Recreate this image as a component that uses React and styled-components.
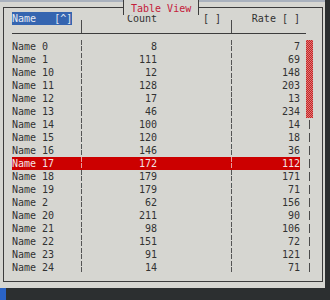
import styled, { createGlobalStyle, css } from 'styled-components';

const rows = [
  ['Name 0', 8, 7],
  ['Name 1', 111, 69],
  ['Name 10', 12, 148],
  ['Name 11', 128, 203],
  ['Name 12', 17, 13],
  ['Name 13', 46, 234],
  ['Name 14', 100, 14],
  ['Name 15', 120, 18],
  ['Name 16', 146, 36],
  ['Name 17', 172, 112],
  ['Name 18', 179, 171],
  ['Name 19', 179, 71],
  ['Name 2', 62, 156],
  ['Name 20', 211, 90],
  ['Name 21', 98, 106],
  ['Name 22', 151, 72],
  ['Name 23', 91, 121],
  ['Name 24', 14, 71],
];

const selectedRow = 'Name 17';

// thumb covers the first six rows
const thumbRows = 6;

function App() {
  return (
    <>
      <GlobalStyle />
      <Screen>
        <Window>
          <Title>Table View</Title>
          <Frame>
            <HeaderRow>
              <NameHeader>Name   [^]</NameHeader>
              <HeaderTick />
              <CountHeader>
                <span>Count</span>
                <span>[ ]</span>
              </CountHeader>
              <HeaderTick />
              <RateHeader>Rate [ ]</RateHeader>
            </HeaderRow>

            <Body>
              <Rows>
                {rows.map(([name, count, rate]) => {
                  const active = name === selectedRow;
                  return (
                    <Row key={name} $active={active}>
                      <NameCell>{name}</NameCell>
                      <Divider $active={active} />
                      <CountCell>{count}</CountCell>
                      <Divider $active={active} />
                      <RateCell>{rate}</RateCell>
                    </Row>
                  );
                })}
              </Rows>

              <ScrollBar>
                <Thumb style={{ height: thumbRows * 13 }} />
                <Track />
              </ScrollBar>
            </Body>
          </Frame>
        </Window>

        <BottomBar>
          <TaskBlock />
        </BottomBar>
      </Screen>
    </>
  );
}

const GlobalStyle = createGlobalStyle`
  * {
    margin: 0;
    padding: 0;
    box-sizing: border-box;
  }

  body {
    background: #2c2f30;
    font-family: 'DejaVu Sans Mono', 'Liberation Mono', monospace;
    font-size: 10px;
    color: #323232;
  }
`;

const Screen = styled.div`
  width: 330px;
  height: 300px;
  display: flex;
  flex-direction: column;
  background: #2c2f30;
  overflow: hidden;
`;

const Window = styled.div`
  position: relative;
  width: 325px;
  height: 288px;
  background: #d6d6d1;
  border-top: 2px solid #a9b1bd;
  padding: 5px 2px 6px 3px;
`;

const Title = styled.div`
  position: absolute;
  top: -2px;
  left: 123px;
  height: 15px;
  padding: 3px 7px 0;
  line-height: 12px;
  color: #c4203a;
  background: #d6d6d1;
  border-left: 1px solid #3c3c3c;
  border-right: 1px solid #3c3c3c;
  white-space: pre;
`;

const Frame = styled.div`
  width: 320px;
  height: 275px;
  border: 1px solid #3c3c3c;
  padding: 4px 0 0 8px;
`;

const columns = '69px 1px 149px 1px 68px';

const HeaderRow = styled.div`
  display: grid;
  grid-template-columns: ${columns} 6px;
  height: 22px;
  width: 294px;
  border-bottom: 1px solid #3c3c3c;
  line-height: 13px;
  white-space: pre;
`;

const headerCell = css`
  align-self: start;
  height: 13px;
`;

const NameHeader = styled.div`
  ${headerCell}
  width: 60px;
  background: #3565b0;
  color: #e4e8f0;
`;

const HeaderTick = styled.div`
  align-self: end;
  height: 13px;
  background: #4a4a4a;
`;

const CountHeader = styled.div`
  ${headerCell}
  display: flex;
  justify-content: space-between;
  padding-right: 10px;

  span:first-child {
    width: 75px;
    text-align: right;
  }
`;

const RateHeader = styled.div`
  ${headerCell}
  text-align: right;
`;

const Body = styled.div`
  display: flex;
  gap: 6px;
  margin-top: 6px;
`;

const Rows = styled.div`
  display: flex;
  flex-direction: column;
  width: 288px;
`;

const Row = styled.div`
  display: grid;
  grid-template-columns: ${columns};
  height: 13px;
  line-height: 13px;
  white-space: pre;
  background: ${({ $active }) => ($active ? '#cc0000' : 'transparent')};
  color: ${({ $active }) => ($active ? '#f4e4e4' : '#323232')};
`;

const Divider = styled.div`
  background: repeating-linear-gradient(
    to bottom,
    ${({ $active }) => ($active ? '#e8a0a0' : '#555')} 0 5px,
    transparent 5px 6.5px
  );
`;

const NameCell = styled.div``;

const CountCell = styled.div`
  text-align: right;
  padding-right: 74px;
`;

const RateCell = styled.div`
  text-align: right;
`;

const ScrollBar = styled.div`
  display: flex;
  flex-direction: column;
  width: 7px;
`;

const Thumb = styled.div`
  background: repeating-conic-gradient(#c42424 0 25%, #e27a7a 0 50%) 0 0 / 2px 2px;
`;

const Track = styled.div`
  flex: 1;
  margin-left: 3px;
  width: 1px;
  background: repeating-linear-gradient(
    to bottom,
    transparent 0 2px,
    #4a4a4a 2px 11px,
    transparent 11px 13px
  );
`;

const BottomBar = styled.div`
  display: flex;
  height: 12px;
`;

const TaskBlock = styled.div`
  width: 6px;
  background: #2a63c6;
`;

export default App;
